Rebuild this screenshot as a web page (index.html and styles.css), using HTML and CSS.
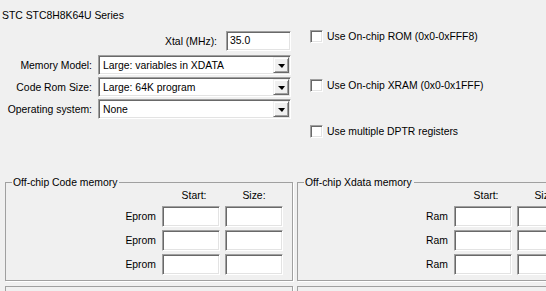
FILE: index.html
```html
<!DOCTYPE html>
<html lang="en">
<head>
    <meta charset="UTF-8">
    <title>Target options</title>
    <link rel="stylesheet" href="styles.css">
</head>
<body>
<div class="page">
    <div class="title">STC STC8H8K64U Series</div>

    <div class="top">
        <div class="form">
            <div class="xtal">
                <span>Xtal (MHz):</span>
                <div class="edit">35.0</div>
            </div>
            <span class="lbl">Memory Model:</span>
            <div class="combo"><span>Large: variables in XDATA</span><i class="drop"></i></div>
            <span class="lbl">Code Rom Size:</span>
            <div class="combo"><span>Large: 64K program</span><i class="drop"></i></div>
            <span class="lbl">Operating system:</span>
            <div class="combo"><span>None</span><i class="drop"></i></div>
        </div>

        <div class="checks">
            <label class="chk c1"><i class="box"></i>Use On-chip ROM (0x0-0xFFF8)</label>
            <label class="chk c2"><i class="box"></i>Use On-chip XRAM (0x0-0x1FFF)</label>
            <label class="chk c3"><i class="box"></i>Use multiple DPTR registers</label>
        </div>
    </div>

    <div class="groups">
        <fieldset class="group">
            <legend>Off-chip Code memory</legend>
            <div class="mem">
                <span></span><span class="head start">Start:</span><span class="head">Size:</span>
                <span class="rl">Eprom</span><div class="edit"></div><div class="edit"></div>
                <span class="rl">Eprom</span><div class="edit"></div><div class="edit"></div>
                <span class="rl">Eprom</span><div class="edit"></div><div class="edit"></div>
            </div>
        </fieldset>
        <fieldset class="group">
            <legend>Off-chip Xdata memory</legend>
            <div class="mem">
                <span></span><span class="head start">Start:</span><span class="head">Size:</span>
                <span class="rl">Ram</span><div class="edit"></div><div class="edit"></div>
                <span class="rl">Ram</span><div class="edit"></div><div class="edit"></div>
                <span class="rl">Ram</span><div class="edit"></div><div class="edit"></div>
            </div>
        </fieldset>
    </div>

    <div class="groups next">
        <div class="group stub"></div>
        <div class="group stub"></div>
    </div>
</div>
</body>
</html>
```

FILE: styles.css
```css
* {
    margin: 0;
    padding: 0;
    box-sizing: border-box;
}

html, body {
    width: 546px;
    height: 291px;
    overflow: hidden;
    background: #f0f0f0;
}

body {
    font-family: "Liberation Sans", Arial, sans-serif;
    font-size: 10.4px;
    line-height: 13px;
    color: #000;
}

.page {
    padding-top: 9px;
}

.title {
    padding-left: 2px;
    height: 13px;
}

/* upper part */
.top {
    display: flex;
    align-items: flex-start;
    margin-top: 9px;
}

.form {
    width: 291px;
    display: grid;
    grid-template-columns: 92px 193px;
    column-gap: 6px;
    row-gap: 2px;
    align-items: center;
    align-content: start;
}

.xtal {
    grid-column: 1 / -1;
    display: flex;
    justify-content: flex-end;
    align-items: center;
    margin-bottom: 2px;
}

.xtal .edit {
    width: 65px;
    height: 20px;
    margin-left: 9px;
    padding: 2px 0 0 3px;
}

.lbl {
    text-align: right;
    white-space: nowrap;
}

.edit {
    background: #fff;
    border: 1px solid;
    border-color: #a0a0a0 #fff #fff #a0a0a0;
    box-shadow: inset 1px 1px #696969, inset -1px -1px #e3e3e3;
}

.combo {
    height: 20px;
    display: flex;
    align-items: stretch;
    background: #fff;
    border: 1px solid;
    border-color: #a0a0a0 #fff #fff #a0a0a0;
    box-shadow: inset 1px 1px #696969, inset -1px -1px #e3e3e3;
    padding: 1px;
}

.combo span {
    flex: 1;
    padding: 2px 0 0 3px;
    white-space: nowrap;
}

.drop {
    width: 16px;
    background: #f0f0f0;
    border: 1px solid;
    border-color: #f0f0f0 #696969 #696969 #f0f0f0;
    box-shadow: inset 1px 1px #fff, inset -1px -1px #a0a0a0;
    display: flex;
    justify-content: center;
    align-items: center;
}

.drop::after {
    content: "";
    border-left: 4px solid transparent;
    border-right: 3px solid transparent;
    border-top: 4px solid #000;
    margin-top: 1px;
}

.checks {
    margin-left: 19px;
    display: flex;
    flex-direction: column;
    margin-top: -1px;
}

.chk {
    display: flex;
    align-items: center;
    height: 13px;
    white-space: nowrap;
}

.c2 {
    margin-top: 36px;
}

.c3 {
    margin-top: 33px;
}

.box {
    width: 13px;
    height: 13px;
    margin-right: 4px;
    background: #fff;
    border: 1px solid;
    border-color: #a0a0a0 #fff #fff #a0a0a0;
    box-shadow: inset 1px 1px #696969, inset -1px -1px #e3e3e3;
}

/* group boxes */
.groups {
    display: flex;
    gap: 4px;
    padding-left: 5px;
    margin-top: 38px;
}

.group {
    flex: 0 0 288px;
    border: 1px solid #a0a0a0;
    box-shadow: 1px 1px 0 #fff;
    padding: 0 9px 5px 0;
}

.group legend {
    margin-left: 6px;
    padding: 0 2px 0 1px;
    line-height: 13px;
}

.mem {
    display: grid;
    grid-template-columns: 1fr 58px 58px;
    grid-template-rows: 14px 21px 21px 21px;
    column-gap: 5px;
    row-gap: 3px;
    align-items: center;
}

.head {
    text-align: center;
    align-self: start;
}

.start {
    padding-left: 6px;
}

.rl {
    text-align: right;
    padding-right: 1px;
}

.mem .edit {
    height: 21px;
}

.next {
    margin-top: 5px;
}

.stub {
    height: 6px;
    padding: 0;
    border-bottom: 0;
}
```
